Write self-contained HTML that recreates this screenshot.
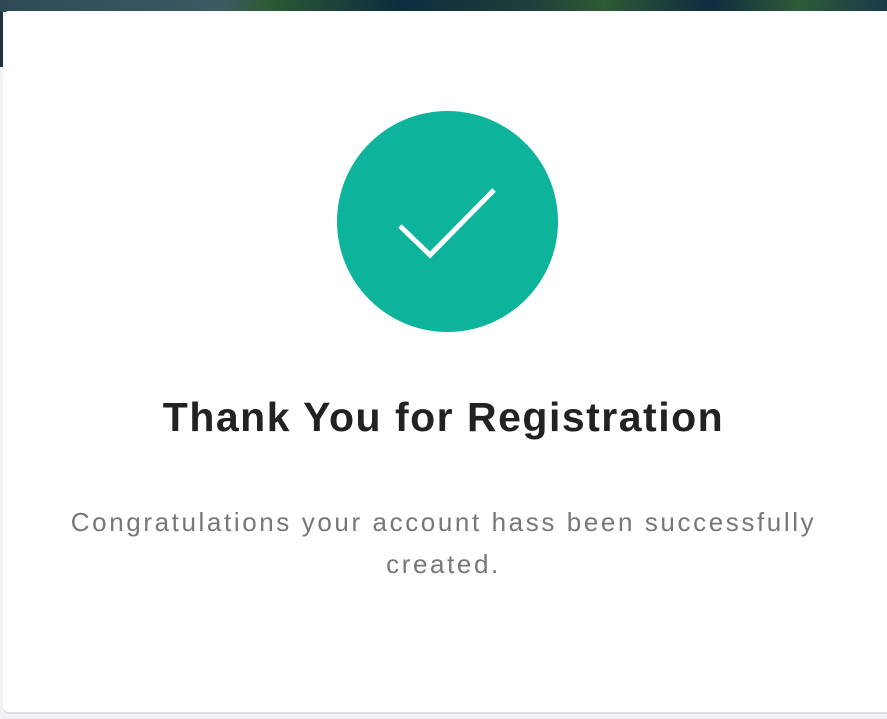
<!DOCTYPE html>
<html><head><style>
html,body{margin:0;padding:0;width:887px;height:719px;overflow:hidden;background:#f2f2f4;font-family:"Liberation Sans",sans-serif}
.top{position:absolute;left:0;top:0;width:887px;height:12px;background:linear-gradient(90deg,#2d4a55,#3d5a63 25%,#2e5a35 30%,#0d2c3e 45%,#1f3f3a 60%,#2f5a34 68%,#0f2b40 80%,#2f5a38 90%,#1a3a48)}
.ls{position:absolute;left:0;top:12px;width:3px;height:55px;background:#1d3340}
.card{position:absolute;left:3px;top:11px;width:890px;height:701px;background:#fff;border-radius:6px 0 0 6px;border-bottom:2px solid #dcdcdc}
.c{position:absolute;left:337px;top:111px;width:221px;height:221px;border-radius:50%;background:#0db39b}
h1{position:absolute;left:0;width:887px;top:394px;margin:0;text-align:center;font-size:41px;font-weight:bold;color:#222;letter-spacing:1.5px}
p{position:absolute;left:0;width:887px;top:501px;margin:0;text-align:center;font-size:26px;line-height:42px;color:#777;letter-spacing:2.6px}
</style></head><body>
<div class="top"></div><div class="ls"></div>
<div class="card"></div>
<div class="c"></div>
<svg style="position:absolute;left:0;top:0" width="887" height="719"><path d="M400 226 L430 255 L494 190" fill="none" stroke="#fff" stroke-width="5"/></svg>
<h1>Thank You for Registration</h1>
<p>Congratulations your account hass been successfully<br>created.</p>
</body></html>
